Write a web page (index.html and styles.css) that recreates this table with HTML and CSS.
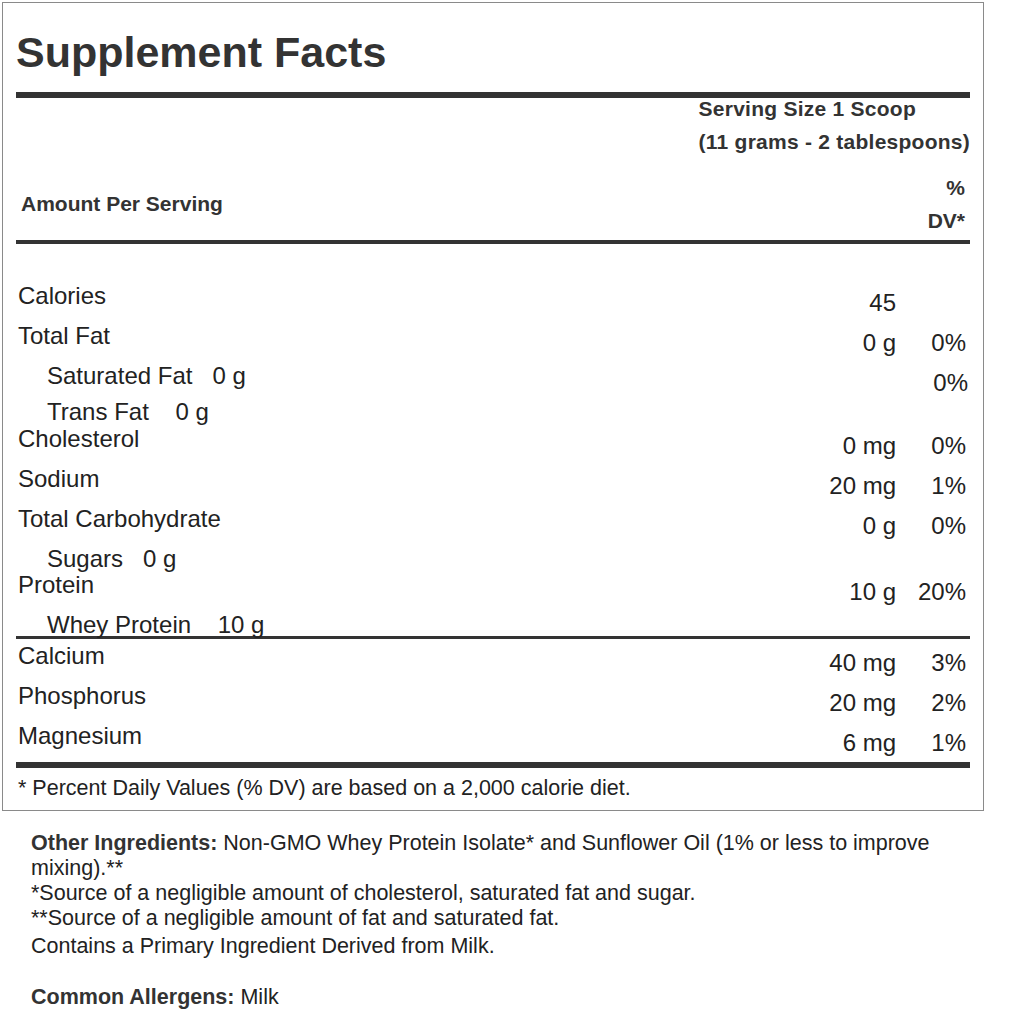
FILE: index.html
```html
<!DOCTYPE html>
<html lang="en">
<head>
<meta charset="utf-8">
<title>Supplement Facts</title>
<link rel="stylesheet" href="styles.css">
</head>
<body>
<div class="page">
  <section class="facts">
    <h1 class="title">Supplement Facts</h1>
    <div class="rule-thick"></div>
    <div class="serving">
      <div>Serving Size 1 Scoop</div>
      <div>(11 grams - 2 tablespoons)</div>
    </div>
    <div class="amount-head">
      <div class="amount-label">Amount Per Serving</div>
      <div class="dv-head">%<br>DV*</div>
    </div>
    <div class="rule-mid"></div>
    <div class="rows">
      <div class="row"><div class="label">Calories</div><div class="amt">45</div><div class="dv"></div></div>
      <div class="row"><div class="label">Total Fat</div><div class="amt">0 g</div><div class="dv">0%</div></div>
      <div class="row row-sub row-sat"><div class="label">Saturated Fat &nbsp;&nbsp;0 g</div><div class="amt"></div><div class="dv dv-nudge">0%</div></div>
      <div class="row row-sub row-short"><div class="label">Trans Fat &nbsp;&nbsp;&nbsp;0 g</div></div>
      <div class="row"><div class="label">Cholesterol</div><div class="amt">0 mg</div><div class="dv">0%</div></div>
      <div class="row"><div class="label">Sodium</div><div class="amt">20 mg</div><div class="dv">1%</div></div>
      <div class="row"><div class="label">Total Carbohydrate</div><div class="amt">0 g</div><div class="dv">0%</div></div>
      <div class="row row-sub row-tight"><div class="label">Sugars &nbsp;&nbsp;0 g</div></div>
      <div class="row"><div class="label">Protein</div><div class="amt">10 g</div><div class="dv">20%</div></div>
      <div class="row row-sub row-last"><div class="label">Whey Protein &nbsp;&nbsp;&nbsp;10 g</div></div>
    </div>
    <div class="rule-thin"></div>
    <div class="rows-minerals">
      <div class="row"><div class="label">Calcium</div><div class="amt">40 mg</div><div class="dv">3%</div></div>
      <div class="row"><div class="label">Phosphorus</div><div class="amt">20 mg</div><div class="dv">2%</div></div>
      <div class="row"><div class="label">Magnesium</div><div class="amt">6 mg</div><div class="dv">1%</div></div>
    </div>
    <div class="rule-bottom"></div>
    <p class="footnote">* Percent Daily Values (% DV) are based on a 2,000 calorie diet.</p>
  </section>
  <section class="other">
    <p class="ingredients"><b>Other Ingredients:</b> Non-GMO Whey Protein Isolate* and Sunflower Oil (1% or less to improve mixing).**<br>*Source of a negligible amount of cholesterol, saturated fat and sugar.<br>**Source of a negligible amount of fat and saturated fat.</p>
    <p class="contains">Contains a Primary Ingredient Derived from Milk.</p>
    <p class="allergens"><b>Common Allergens:</b> Milk</p>
  </section>
</div>
</body>
</html>
```

FILE: styles.css
```css
* { box-sizing: border-box; }

body {
  margin: 0;
  background: #fff;
  color: #222;
  font-family: "Liberation Sans", Arial, sans-serif;
}

.page {
  padding: 2px;
}

.facts {
  width: 982px;
  border: 1px solid #8a8a8a;
  padding: 28px 13px 10px 13px;
}

.title {
  margin: 0;
  font-size: 43px;
  line-height: 43px;
  font-weight: bold;
  color: #333;
}

.rule-thick {
  height: 6px;
  margin-top: 18px;
  background: #333;
}

.serving {
  display: flex;
  flex-direction: column;
  align-items: flex-start;
  gap: 11px;
  width: fit-content;
  margin-left: auto;
  font-size: 21px;
  line-height: 22px;
  font-weight: bold;
  letter-spacing: 0.25px;
  color: #333;
}

.amount-head {
  display: flex;
  justify-content: space-between;
  align-items: center;
  margin-top: 18px;
  font-size: 21px;
  font-weight: bold;
  color: #333;
}

.amount-label {
  padding-left: 5px;
  line-height: 24px;
}

.dv-head {
  line-height: 33px;
  text-align: right;
  padding-right: 5px;
}

.rule-mid {
  height: 4px;
  margin-top: 3px;
  background: #333;
}

.rows {
  padding-top: 38px;
}

.row {
  display: flex;
  height: 40px;
  padding-left: 2px;
  padding-right: 4px;
  font-size: 24px;
  line-height: 27px;
  white-space: nowrap;
}

.row-sub { padding-left: 31px; }
.row-sat { height: 36px; }
.row-short { height: 27px; }
.row-tight { height: 26px; }
.row-last { height: 25px; }

.label {
  flex: 1;
}

.amt {
  padding-top: 7px;
  text-align: right;
}

.dv {
  width: 70px;
  padding-top: 7px;
  text-align: right;
}

.dv-nudge {
  margin-right: -2px;
}

.rule-thin {
  height: 3px;
  margin-bottom: 3px;
  background: #333;
}

.rule-bottom {
  height: 6px;
  background: #333;
}

.footnote {
  margin: 9px 0 0 0;
  padding-left: 2px;
  font-size: 21.5px;
  line-height: 23px;
}

.other {
  padding: 20px 0 0 29px;
  font-size: 21.5px;
  line-height: 25px;
}

.other p {
  margin: 0;
}

.other b {
  color: #333;
}

.contains {
  margin-top: 3px !important;
}

.allergens {
  margin-top: 26px !important;
}
```
